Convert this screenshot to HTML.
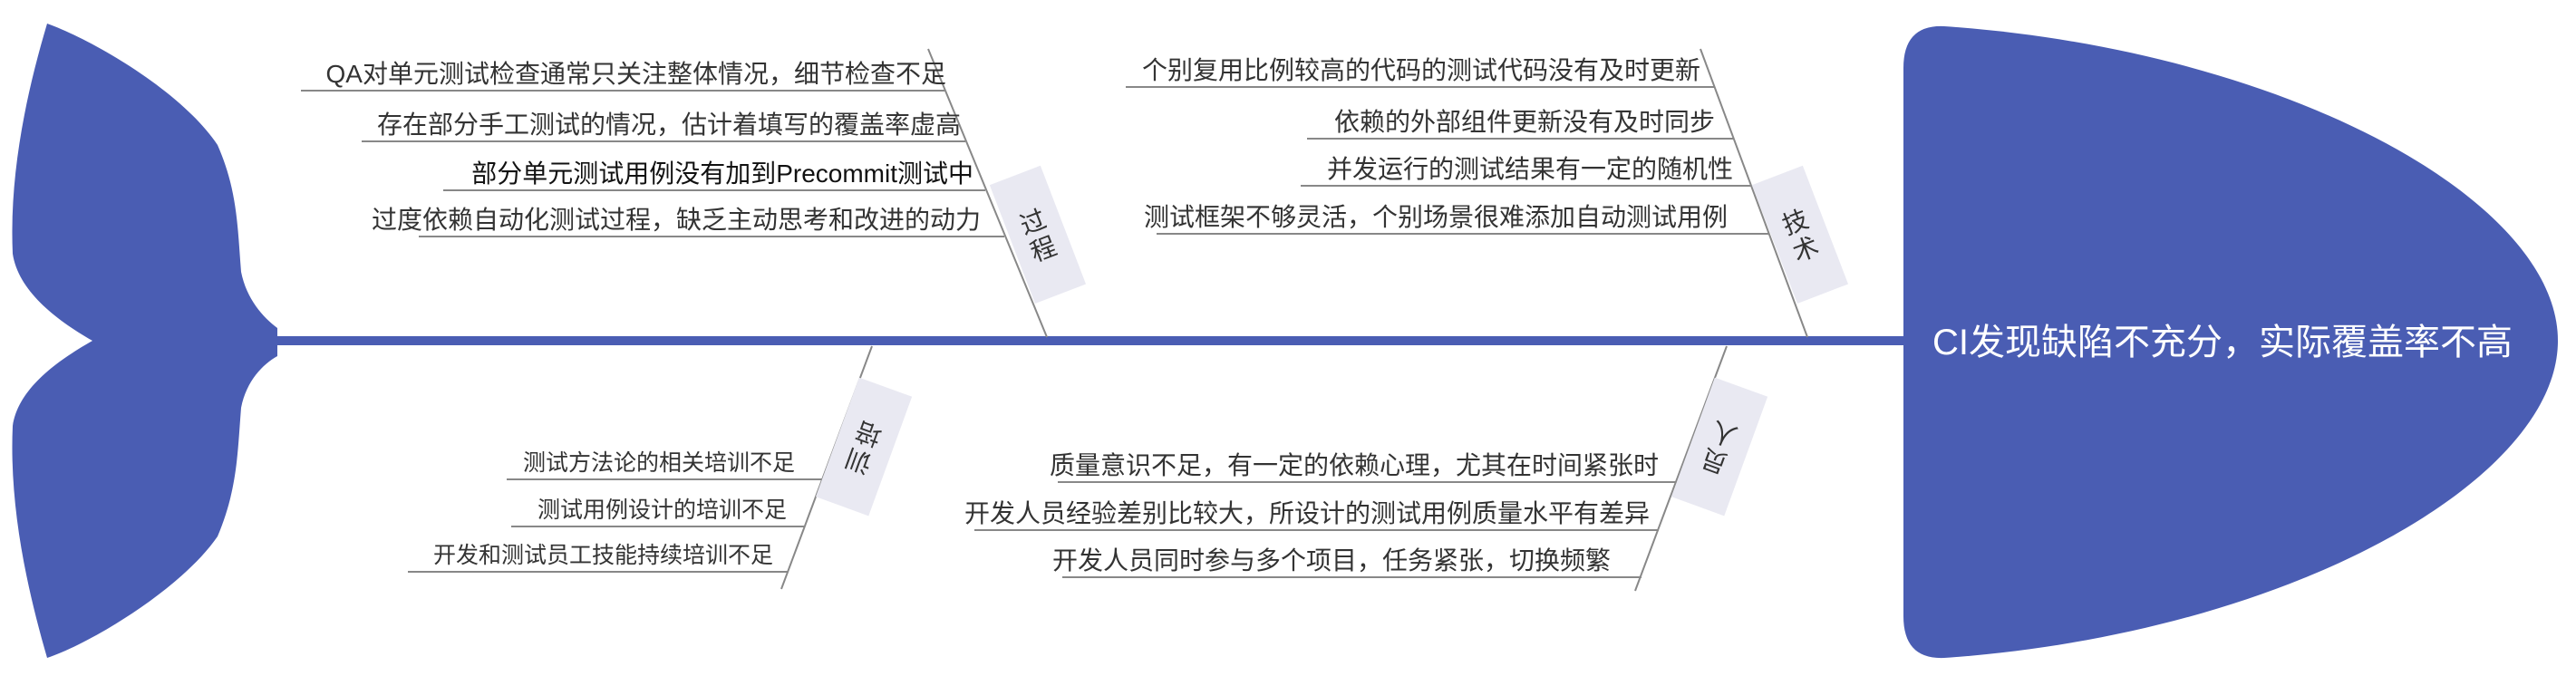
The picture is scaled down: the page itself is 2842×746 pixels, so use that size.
<!DOCTYPE html>
<html><head><meta charset="utf-8"><style>
html,body{margin:0;padding:0;background:#fff;}
svg{display:block;}
text{font-family:"Liberation Sans","Noto Sans CJK SC",sans-serif;}
</style></head><body>
<svg width="2842" height="746" viewBox="0 0 2842 746" xmlns="http://www.w3.org/2000/svg">
<path fill="#4a5db3" d="M52,26 C100,43 200,100 240,160 C262,210 262,250 266,300 C272,330 290,350 306,362 L306,393 C290,402 272,420 266,450 C262,500 262,540 240,592 C200,650 100,710 52,726 C30,650 10,560 14,470 C20,430 60,400 102,376 C60,352 20,320 14,280 C10,190 30,100 52,26 Z"/>
<rect x="300" y="371" width="1810" height="10" fill="#4a5db3"/>
<path fill="#4a5db3" d="M2145,29 C2520,55 2822,220 2822,376 C2822,532 2520,700 2145,726 Q2100,728 2100,680 L2100,75 Q2100,27 2145,29 Z"/>
<text x="2452" y="391" font-size="40" fill="#fff" text-anchor="middle">CI发现缺陷不充分，实际覆盖率不高</text>

<g stroke="#888" stroke-width="2" fill="none">
<line x1="1024" y1="54" x2="1155" y2="372"/>
<line x1="332" y1="100" x2="1042" y2="100"/>
<line x1="399" y1="156" x2="1065" y2="156"/>
<line x1="489" y1="210" x2="1087" y2="210"/>
<line x1="462" y1="261" x2="1108" y2="261"/>
<line x1="1876" y1="54" x2="1994" y2="372"/>
<line x1="1242" y1="96" x2="1892" y2="96"/>
<line x1="1442" y1="153" x2="1913" y2="153"/>
<line x1="1435" y1="205" x2="1932" y2="205"/>
<line x1="1276" y1="258" x2="1951" y2="258"/>
<line x1="962" y1="382" x2="862" y2="650"/>
<line x1="559" y1="529" x2="907" y2="529"/>
<line x1="564" y1="581" x2="888" y2="581"/>
<line x1="450" y1="631" x2="869" y2="631"/>
<line x1="1905" y1="382" x2="1804" y2="652"/>
<line x1="1167" y1="532" x2="1850" y2="532"/>
<line x1="1075" y1="585" x2="1830" y2="585"/>
<line x1="1172" y1="637" x2="1811" y2="637"/>
</g>

<g font-size="28" fill="#333" text-anchor="end">
<text x="1044" y="91">QA对单元测试检查通常只关注整体情况，细节检查不足</text>
<text x="1060" y="147">存在部分手工测试的情况，估计着填写的覆盖率虚高</text>
<text x="1074" y="201" fill="#111">部分单元测试用例没有加到Precommit测试中</text>
<text x="1082" y="252">过度依赖自动化测试过程，缺乏主动思考和改进的动力</text>
<text x="1876" y="87">个别复用比例较高的代码的测试代码没有及时更新</text>
<text x="1892" y="144">依赖的外部组件更新没有及时同步</text>
<text x="1912" y="196">并发运行的测试结果有一定的随机性</text>
<text x="1906" y="249">测试框架不够灵活，个别场景很难添加自动测试用例</text>
<text x="1830" y="523">质量意识不足，有一定的依赖心理，尤其在时间紧张时</text>
<text x="1820" y="576">开发人员经验差别比较大，所设计的测试用例质量水平有差异</text>
<text x="1777" y="628">开发人员同时参与多个项目，任务紧张，切换频繁</text>
</g>
<g font-size="25" fill="#333" text-anchor="end">
<text x="877" y="519">测试方法论的相关培训不足</text>
<text x="868" y="571">测试用例设计的培训不足</text>
<text x="853" y="621">开发和测试员工技能持续培训不足</text>
</g>

<g transform="translate(1116,270) rotate(-21)">
<rect x="1" y="-70" width="60" height="140" fill="#e9e9f2"/>
<text x="31" y="-5" font-size="28" fill="#333" text-anchor="middle">过</text>
<text x="31" y="27" font-size="28" fill="#333" text-anchor="middle">程</text>
</g>
<g transform="translate(1957,270) rotate(-21)">
<rect x="1" y="-70" width="60" height="140" fill="#e9e9f2"/>
<text x="31" y="-5" font-size="28" fill="#333" text-anchor="middle">技</text>
<text x="31" y="27" font-size="28" fill="#333" text-anchor="middle">术</text>
</g>
<g transform="translate(923,482) rotate(20)">
<rect x="1" y="-70" width="62" height="140" fill="#e9e9f2"/>
<text transform="translate(32,-15) rotate(180)" y="10" font-size="28" fill="#333" text-anchor="middle">培</text>
<text transform="translate(32,17) rotate(180)" y="10" font-size="28" fill="#333" text-anchor="middle">训</text>
</g>
<g transform="translate(1867,482) rotate(20)">
<rect x="1" y="-70" width="62" height="140" fill="#e9e9f2"/>
<text transform="translate(32,-15) rotate(180)" y="10" font-size="28" fill="#333" text-anchor="middle">人</text>
<text transform="translate(32,17) rotate(180)" y="10" font-size="28" fill="#333" text-anchor="middle">员</text>
</g>
</svg>
</body></html>
